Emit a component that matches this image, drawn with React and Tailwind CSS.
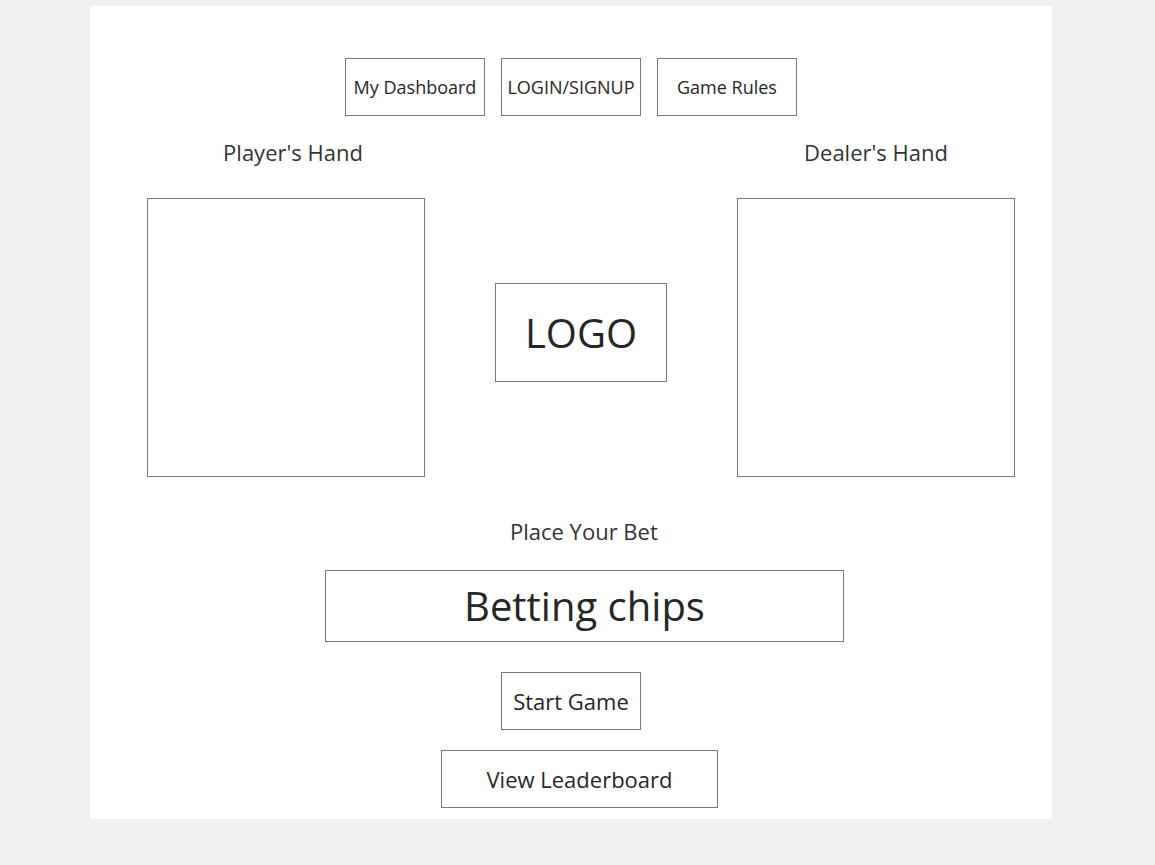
const font = { fontFamily: '"Open Sans", "Noto Sans", sans-serif' };

function Box({ className = '', children }) {
  return (
    <div className={`border border-[#7a7a7a] flex items-center justify-center text-[#262626] ${className}`}>
      {children}
    </div>
  );
}

export default function App() {
  return (
    <div className="min-h-[865px] bg-[#f0f0f0] pt-[6px]" style={font}>
      <div className="ml-[90px] w-[962px] h-[813px] bg-white flex flex-col">
        {/* top nav */}
        <div className="flex justify-center gap-[16px] pt-[52px]">
          <Box className="w-[140px] h-[58px] text-[18px]">My Dashboard</Box>
          <Box className="w-[140px] h-[58px] text-[18px]">LOGIN/SIGNUP</Box>
          <Box className="w-[140px] h-[58px] text-[18px]">Game Rules</Box>
        </div>

        {/* hands */}
        <div className="flex pl-[57px] gap-[70px] mt-[22px]">
          <div className="flex flex-col items-center w-[278px]">
            <p className="text-[22px] leading-[28px] text-[#333] pl-[14px]">Player's Hand</p>
            <Box className="mt-[32px] w-[278px] h-[279px]" />
          </div>
          <Box className="mt-[145px] w-[172px] h-[99px] text-[40px]">LOGO</Box>
          <div className="flex flex-col items-center w-[278px]">
            <p className="text-[22px] leading-[28px] text-[#333]">Dealer's Hand</p>
            <Box className="mt-[32px] w-[278px] h-[279px]" />
          </div>
        </div>

        {/* bet */}
        <p className="mt-[40px] ml-[420px] text-[22px] leading-[28px] text-[#333]">Place Your Bet</p>
        <Box className="mt-[25px] ml-[235px] w-[519px] h-[72px] text-[40px]">Betting chips</Box>
        <Box className="mt-[30px] ml-[411px] w-[140px] h-[58px] text-[22px]">Start Game</Box>
        <Box className="mt-[20px] ml-[351px] w-[277px] h-[58px] text-[22px]">View Leaderboard</Box>
      </div>
    </div>
  );
}
